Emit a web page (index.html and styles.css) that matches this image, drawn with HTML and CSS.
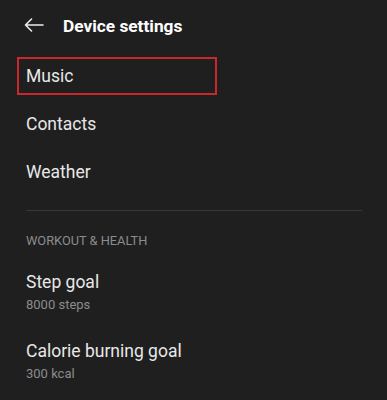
FILE: index.html
```html
<!DOCTYPE html>
<html>
<head>
<meta charset="utf-8">
<link rel="stylesheet" href="styles.css">
</head>
<body>
<div class="screen">
  <header class="topbar">
    <svg class="back" width="20" height="14" viewBox="0 0 20 14">
      <path d="M1.5 7H19M7.5 1L1.5 7l6 6" fill="none" stroke="#ececec" stroke-width="1.6" stroke-linecap="round" stroke-linejoin="round"/>
    </svg>
    <h1 class="title">Device settings</h1>
  </header>
  <div class="row highlighted"><span class="label">Music</span></div>
  <div class="row"><span class="label">Contacts</span></div>
  <div class="row"><span class="label">Weather</span></div>
  <div class="divider"></div>
  <div class="section">WORKOUT &amp; HEALTH</div>
  <div class="items">
    <div class="item">
      <div class="label">Step goal</div>
      <div class="sub">8000 steps</div>
    </div>
    <div class="item">
      <div class="label">Calorie burning goal</div>
      <div class="sub">300 kcal</div>
    </div>
  </div>
</div>
</body>
</html>
```
FILE: styles.css
```css
html, body {
  margin: 0;
  padding: 0;
  background: #1f1f1f;
}
.screen {
  width: 387px;
  height: 400px;
  overflow: hidden;
  font-family: Roboto, "Noto Sans", sans-serif;
  color: #e8e8e8;
}
.topbar {
  height: 52px;
  display: flex;
  align-items: center;
  padding-left: 24px;
}
.back {
  display: block;
  margin-top: -2px;
}
.title {
  margin: 0 0 0 19px;
  font-size: 17.3px;
  font-weight: 700;
  color: #ffffff;
}
.row {
  height: 48px;
  display: flex;
  align-items: center;
  padding-left: 26px;
  position: relative;
}
.label {
  font-size: 17.5px;
  color: #e8e8e8;
}
.highlighted::after {
  content: "";
  position: absolute;
  left: 17px;
  top: 5px;
  width: 200px;
  height: 38px;
  box-sizing: border-box;
  border: 2px solid #c8282c;
}
.divider {
  height: 1px;
  background: #383838;
  margin: 14px 25px 0 26px;
}
.section {
  padding: 22px 0 0 26px;
  font-size: 12.8px;
  color: #8c8c8c;
  line-height: 16px;
}
.items {
  padding-top: 9px;
}
.item {
  padding-left: 26px;
  height: 69px;
  display: flex;
  flex-direction: column;
  justify-content: center;
}
.item .label {
  line-height: 22px;
}
.sub {
  font-size: 13px;
  color: #8c8c8c;
  line-height: 18px;
  margin-top: 3px;
}
```
